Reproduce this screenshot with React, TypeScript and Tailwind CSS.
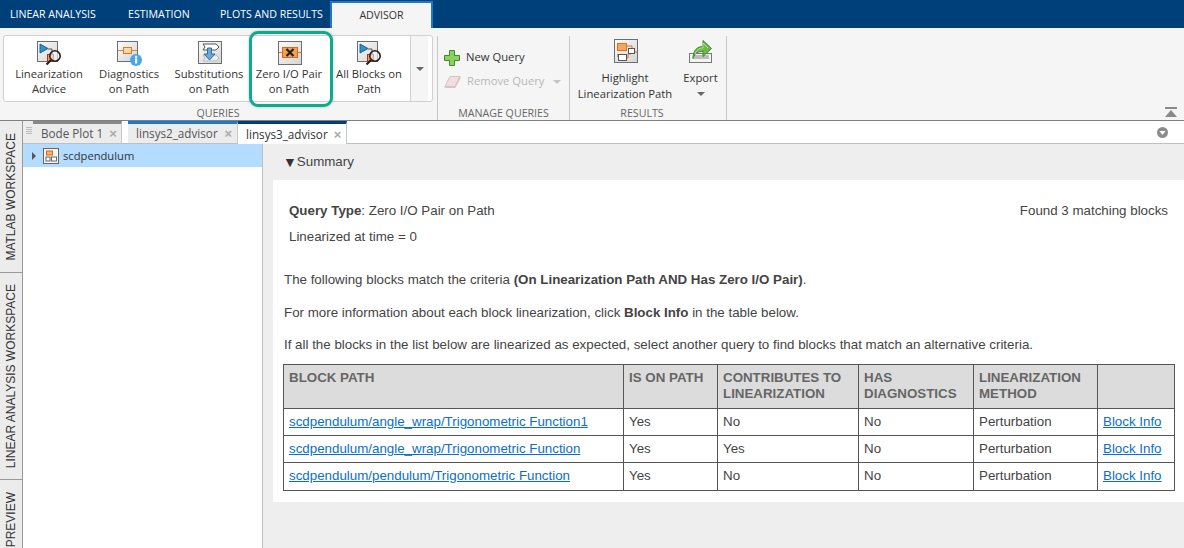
import type { ReactNode } from 'react';

const ribbonFont = "font-['Open_Sans',sans-serif]";

function Frame({ children, w = 20, h = 20 }: { children?: ReactNode; w?: number; h?: number }) {
  return (
    <svg width={w + 8} height={h + 8} viewBox={`0 0 ${w + 8} ${h + 8}`} className="block">
      <defs>
        <linearGradient id="fr" x1="0" y1="0" x2="1" y2="1">
          <stop offset="0" stopColor="#fbfbfb" />
          <stop offset="1" stopColor="#d4d4d4" />
        </linearGradient>
      </defs>
      <rect x="0.5" y="0.5" width={w} height={h} fill="url(#fr)" stroke="#6e6e6e" />
      {children}
    </svg>
  );
}

function AdviceIcon() {
  return (
    <Frame>
      <path d="M3 3v9l8-4.5z" fill="#2f8fd8" stroke="#1c5f9c" />
      <path d="M11 8h4v5" fill="none" stroke="#555" />
      <rect x="10.5" y="13.5" width="6" height="7" fill="#e8a070" stroke="#b0341c" />
      <circle cx="18" cy="15" r="5.2" fill="#ffffff" fillOpacity="0.55" stroke="#222" strokeWidth="1.6" />
      <path d="M14 19l-4.5 4.5" stroke="#222" strokeWidth="2.2" />
    </Frame>
  );
}

function DiagnosticsIcon() {
  return (
    <Frame>
      <path d="M1 9.5h19" stroke="#d9833a" />
      <rect x="6.5" y="6.5" width="8" height="6" fill="#fbd9a4" stroke="#d9762a" />
      <circle cx="19" cy="19" r="6" fill="#48a6ea" />
      <rect x="18" y="17.5" width="2.2" height="5" fill="#fff" />
      <rect x="18" y="14.8" width="2.2" height="2" fill="#fff" />
    </Frame>
  );
}

function SubstitutionsIcon() {
  return (
    <Frame w={23} h={22}>
      <path d="M5 3h13l3 3-3 3H5l2-3z" fill="#fff" stroke="#555" />
      <path d="M5 14h13l3 3-3 3H5l2-3z" fill="#eee" stroke="#bbb" />
      <path d="M9.5 7h4v6h3.5l-5.5 6-5.5-6h3.5z" fill="#6aa6d8" stroke="#2f6da6" />
    </Frame>
  );
}

function ZeroIcon() {
  return (
    <Frame w={23} h={23}>
      <path d="M1 11.5h22" stroke="#d9762a" />
      <rect x="4.5" y="6.5" width="15" height="10" fill="#f4a04e" stroke="#d9661a" />
      <path d="M8.5 8l7 7M15.5 8l-7 7" stroke="#222" strokeWidth="2.2" />
    </Frame>
  );
}

function PlusIcon() {
  return (
    <svg width="16" height="17" viewBox="0 0 16 17" className="block">
      <path d="M5.5 1.5h5v5h5v5h-5v5h-5v-5h-5v-5h5z" fill="#8ed05e" stroke="#3f8a2e" />
    </svg>
  );
}

function EraserIcon() {
  return (
    <svg width="17" height="14" viewBox="0 0 17 14" className="block">
      <path d="M6 1.5h10l-5 10H1z" fill="#f3dede" stroke="#d8c4c4" />
      <path d="M1 11.5h10l5-10v2l-5 9H1z" fill="#e6cccc" stroke="#d8c4c4" />
    </svg>
  );
}

function HighlightIcon() {
  return (
    <Frame w={23} h={23}>
      <path d="M13 7h5v4M8 19h6v-4h3M19 13h4" fill="none" stroke="#c9773a" />
      <path d="M4 15v3h2" fill="none" stroke="#555" />
      <rect x="3.5" y="4.5" width="9" height="7" fill="#f7a65a" stroke="#e0701f" />
      <rect x="14.5" y="9.5" width="6" height="5" fill="#fff" stroke="#555" />
      <rect x="4.5" y="15.5" width="8" height="6" fill="#fff" stroke="#555" />
    </Frame>
  );
}

function ExportIcon() {
  return (
    <svg width="24" height="23" viewBox="0 0 24 23" className="block">
      <rect x="0.5" y="13.5" width="22" height="9" fill="#f4f4f4" stroke="#777" />
      <rect x="4" y="15" width="16" height="4" fill="#bcbcbc" />
      <path d="M4 18.5c0-8 4-12 10-12V0.5l8.5 8-8.5 8v-5c-5 0-8 1-10 7z" fill="#6cb84a" stroke="#3f8a2e" />
      <path d="M6 14c1-3 4-6 8-6V3l5 5" fill="none" stroke="#b6e39a" />
    </svg>
  );
}

function RibbonButton({ icon, top, bottom, highlight, wide }: { icon: ReactNode; top: string; bottom: string; highlight?: boolean; wide?: boolean }) {
  return (
    <div className="relative w-[80px] flex flex-col items-center pt-[5px] text-[#333]">
      <div className={`h-[25px] shrink-0 ${wide ? 'pl-[8px]' : 'pl-[4px]'}`}>{icon}</div>
      <div className="text-center leading-[15px] whitespace-nowrap">
        {top}
        <br />
        {bottom}
      </div>
      {highlight && (
        <div className="absolute left-0 top-[-5px] w-[84px] h-[76px] rounded-[9px] border-[3px] border-[#0bab8f] shadow-[0_0_3px_rgba(0,0,0,0.25)]" />
      )}
    </div>
  );
}

function Caret({ color = '#666' }: { color?: string }) {
  return <div className="w-0 h-0 border-x-[4px] border-x-transparent border-t-[4px]" style={{ borderTopColor: color }} />;
}

function Ribbon() {
  return (
    <div className={`h-[93px] shrink-0 flex bg-[#f5f5f5] border-b border-[#808080] text-[11.25px] ${ribbonFont}`}>
      <div className="w-[438px] flex flex-col items-start border-r border-[#c8c8c8] my-[8px] mb-0 pl-[3px] pr-[4px]">
        <div className="mt-[-1px] w-[430px] h-[67px] shrink-0 flex bg-white border border-[#d0d0d0] rounded-[3px] pl-[5px]">
          <RibbonButton icon={<AdviceIcon />} top="Linearization" bottom="Advice" />
          <RibbonButton icon={<DiagnosticsIcon />} top="Diagnostics" bottom="on Path" />
          <RibbonButton icon={<SubstitutionsIcon />} top="Substitutions" bottom="on Path" wide />
          <RibbonButton icon={<ZeroIcon />} top="Zero I/O Pair" bottom="on Path" highlight wide />
          <RibbonButton icon={<AdviceIcon />} top="All Blocks on" bottom="Path" />
          <div className="w-[18px] ml-[1px] border-l border-[#d0d0d0] bg-[#f5f5f5] rounded-r-[3px] flex justify-center pt-[31px]">
            <Caret />
          </div>
        </div>
        <div className="w-full text-center text-[10.65px] text-[#666] leading-[16px] mt-[3px]">QUERIES</div>
      </div>
      <div className="w-[132px] flex flex-col border-r border-[#c8c8c8] mt-[8px] pl-[6px]">
        <div className="h-[67px] shrink-0 flex flex-col gap-[7px] pt-[13px]">
          <div className="flex items-center gap-[6px] h-[17px] text-[#333]">
            <PlusIcon />
            <span>New Query</span>
          </div>
          <div className="flex items-center gap-[6px] h-[17px] text-[#b8b8b8]">
            <EraserIcon />
            <span>Remove Query</span>
            <span className="ml-[2px]"><Caret color="#c4c4c4" /></span>
          </div>
        </div>
        <div className="text-[10.65px] text-[#666] leading-[16px] text-center mt-[2px] pr-[6px]">MANAGE QUERIES</div>
      </div>
      <div className="w-[157px] flex flex-col border-r border-[#c8c8c8] mt-[8px]">
        <div className="h-[67px] shrink-0 flex">
          <div className="w-[110px] flex flex-col items-center text-[#333] pt-[3px]">
            <div className="h-[32px] shrink-0 pl-[8px]"><HighlightIcon /></div>
            <div className="text-center leading-[16px] whitespace-nowrap mt-[-1px]">
              Highlight
              <br />
              Linearization Path
            </div>
          </div>
          <div className="flex-1 flex flex-col items-center text-[#333] pt-[4px] pr-[5px]">
            <div className="h-[31px] shrink-0"><ExportIcon /></div>
            <div className="leading-[16px] mt-[-1px]">Export</div>
            <div className="mt-[6px]"><Caret /></div>
          </div>
        </div>
        <div className="text-[10.65px] text-[#666] leading-[16px] text-center mt-[2px] pr-[12px]">RESULTS</div>
      </div>
      <div className="flex-1 flex justify-end items-end pr-[7px] pb-[2px]">
        <svg width="12" height="11" viewBox="0 0 12 11" className="block">
          <rect x="0" y="0" width="12" height="2" fill="#8a8a8a" />
          <path d="M6 3l6 7H0z" fill="#8a8a8a" />
        </svg>
      </div>
    </div>
  );
}

function DocTab({ label, kind }: { label: string; kind: 'gray' | 'blue' | 'active' }) {
  const border = kind === 'gray' ? 'border-t-[#888]' : 'border-t-[#1e78c8]';
  const bg = kind === 'active' ? 'bg-white border-t-[#00407a] text-[#333] h-[23px]' : `bg-[#ececec] ${border} text-[#555] h-[22px]`;
  return (
    <div className={`flex items-center justify-between border-t-[3px] border-r border-r-[#c8c8c8] pl-[8px] pr-[5px] whitespace-nowrap ${bg}`}>
      <span className="mt-[1px]">{label}</span>
      <span className="text-[#aaa] text-[13px] leading-none ml-[6px] font-['Liberation_Sans',sans-serif] font-bold">×</span>
    </div>
  );
}

function DocTabs() {
  return (
    <div className={`h-[23px] shrink-0 flex bg-white border-b border-[#c0c0c0] text-[11.7px] ${ribbonFont}`}>
      <div className="w-[10px] flex flex-col gap-[1px] pt-[6px] pl-[3px] bg-[#ececec]">
        {[0, 1, 2, 3].map((i) => (
          <div key={i} className="w-[6px] h-[1px] bg-[#bbb]" />
        ))}
      </div>
      <div className="w-[89px]"><DocTab label="Bode Plot 1" kind="gray" /></div>
      <div className="w-[6px] bg-white" />
      <div className="w-[110px]"><DocTab label="linsys2_advisor" kind="blue" /></div>
      <div className="w-[109px]"><DocTab label="linsys3_advisor" kind="active" /></div>
      <div className="flex-1 flex justify-end items-center pr-[16px]">
        <svg width="11" height="11" viewBox="0 0 11 11" className="block">
          <circle cx="5.5" cy="5.5" r="5.5" fill="#8c8c8c" />
          <path d="M2.5 4h6l-3 4z" fill="#fff" />
        </svg>
      </div>
    </div>
  );
}

function SideTab({ label, h }: { label: string; h: string }) {
  return (
    <div className={`${h} shrink-0 flex items-center justify-center border-b border-[#9a9a9a] bg-[#ececec]`}>
      <span className="[writing-mode:vertical-rl] rotate-180 whitespace-nowrap text-[12px] leading-[23px] text-[#333] font-['Liberation_Sans',sans-serif]">
        {label}
      </span>
    </div>
  );
}

function Tree() {
  return (
    <div className="w-[240px] shrink-0 bg-white border-r border-[#c0c0c0]">
      <div className={`h-[23px] bg-[#b3dcff] flex items-center pl-[9px] text-[11.2px] text-[#333] ${ribbonFont}`}>
        <div className="w-0 h-0 border-y-[4px] border-y-transparent border-l-[4px] border-l-[#555]" />
        <svg width="16" height="16" viewBox="0 0 16 16" className="block ml-[7px]">
          <rect x="0.5" y="0.5" width="15" height="15" fill="#f4f4f4" stroke="#666" />
          <rect x="3.5" y="3" width="6" height="4" fill="#f7b26a" stroke="#d9661a" />
          <rect x="8.5" y="9" width="5" height="4" fill="#fff" stroke="#666" />
          <rect x="3" y="9" width="4" height="4" fill="#fff" stroke="#666" />
        </svg>
        <span className="ml-[4px] mt-[1px]">scdpendulum</span>
      </div>
    </div>
  );
}

const rows = [
  ['scdpendulum/angle_wrap/Trigonometric Function1', 'Yes', 'No', 'No', 'Perturbation'],
  ['scdpendulum/angle_wrap/Trigonometric Function', 'Yes', 'Yes', 'No', 'Perturbation'],
  ['scdpendulum/pendulum/Trigonometric Function', 'Yes', 'No', 'No', 'Perturbation'],
];

const th = 'border border-[#555] text-left align-top px-[5px] pt-[5px] font-bold text-[#666] leading-[16px]';

function BlockTable() {
  return (
    <table className="w-[891px] table-fixed border-collapse">
      <colgroup>
        <col className="w-[340px]" />
        <col className="w-[94px]" />
        <col className="w-[141px]" />
        <col className="w-[115px]" />
        <col className="w-[124px]" />
        <col className="w-[77px]" />
      </colgroup>
      <thead>
        <tr className="h-[44px] bg-[#dcdcdc]">
          <th className={th}>BLOCK PATH</th>
          <th className={th}>IS ON PATH</th>
          <th className={th}>CONTRIBUTES TO LINEARIZATION</th>
          <th className={th}>HAS DIAGNOSTICS</th>
          <th className={th}>LINEARIZATION METHOD</th>
          <th className={th}></th>
        </tr>
      </thead>
      <tbody>
        {rows.map((r, i) => {
          const td = `border border-[#555] px-[5px] text-[#444] ${i === 2 ? 'pb-[2px]' : ''}`;
          return (
            <tr key={i} className={i === 2 ? 'h-[28px]' : 'h-[27px]'}>
              <td className={td}>
                <a className="text-[#0b6fc9] underline">{r[0]}</a>
              </td>
              <td className={td}>{r[1]}</td>
              <td className={td}>{r[2]}</td>
              <td className={td}>{r[3]}</td>
              <td className={td}>{r[4]}</td>
              <td className={td}>
                <a className="text-[#0b6fc9] underline">Block Info</a>
              </td>
            </tr>
          );
        })}
      </tbody>
    </table>
  );
}

function Report() {
  return (
    <div className="flex-1 min-w-0 bg-[#eeeeee] pl-[10px] text-[13.33px] font-['Liberation_Sans',sans-serif] text-[#444]">
      <div className="h-[36px] flex items-center pl-[10px] text-[#444]">
        <span className="text-[14px] text-[#333]">▼</span>
        <span>Summary</span>
      </div>
      <div className="h-[322px] bg-white pl-[11px] pt-[23px]">
        <div className="flex justify-between pl-[5px] pr-[16px] leading-[16px]">
          <div>
            <span className="font-bold">Query Type</span>: Zero I/O Pair on Path
          </div>
          <div>Found 3 matching blocks</div>
        </div>
        <div className="pl-[5px] mt-[10px] leading-[16px]">Linearized at time = 0</div>
        <div className="mt-[27px] leading-[16px]">
          The following blocks match the criteria <span className="font-bold">(On Linearization Path AND Has Zero I/O Pair)</span>.
        </div>
        <div className="mt-[17px] leading-[16px]">
          For more information about each block linearization, click <span className="font-bold">Block Info</span> in the table below.
        </div>
        <div className="mt-[16px] leading-[16px]">
          If all the blocks in the list below are linearized as expected, select another query to find blocks that match an alternative criteria.
        </div>
        <div className="mt-[11px] ml-[-1px]">
          <BlockTable />
        </div>
      </div>
    </div>
  );
}

export default function App() {
  return (
    <div className="w-[1184px] h-[548px] overflow-hidden flex flex-col bg-white">
      <div className={`h-[28px] shrink-0 flex bg-[#00407a] text-[10.6px] text-white ${ribbonFont}`}>
        <div className="w-[118px] pl-[10px] leading-[28px] whitespace-nowrap">LINEAR ANALYSIS</div>
        <div className="w-[92px] pl-[10px] leading-[28px] whitespace-nowrap">ESTIMATION</div>
        <div className="w-[120px] pl-[10px] leading-[28px] whitespace-nowrap">PLOTS AND RESULTS</div>
        <div className="w-[103px] mt-[1px] h-[27px] bg-[#f5f5f5] border-x-[2px] border-t-[2px] border-[#1e78c8] text-center leading-[24px] text-[#333]">ADVISOR</div>
      </div>
      <Ribbon />
      <div className="flex-1 min-h-0 flex">
        <div className="w-[23px] shrink-0 flex flex-col bg-[#ececec] border-r border-[#9a9a9a]">
          <SideTab label="MATLAB WORKSPACE" h="h-[152px]" />
          <SideTab label="LINEAR ANALYSIS WORKSPACE" h="h-[207px]" />
          <div className="flex-1 overflow-hidden flex items-start justify-center pt-[12px]">
            <span className="[writing-mode:vertical-rl] rotate-180 whitespace-nowrap text-[12px] leading-[23px] text-[#333] font-['Liberation_Sans',sans-serif]">PREVIEW</span>
          </div>
        </div>
        <div className="flex-1 min-w-0 flex flex-col">
          <DocTabs />
          <div className="flex-1 min-h-0 flex">
            <Tree />
            <Report />
          </div>
        </div>
      </div>
    </div>
  );
}
